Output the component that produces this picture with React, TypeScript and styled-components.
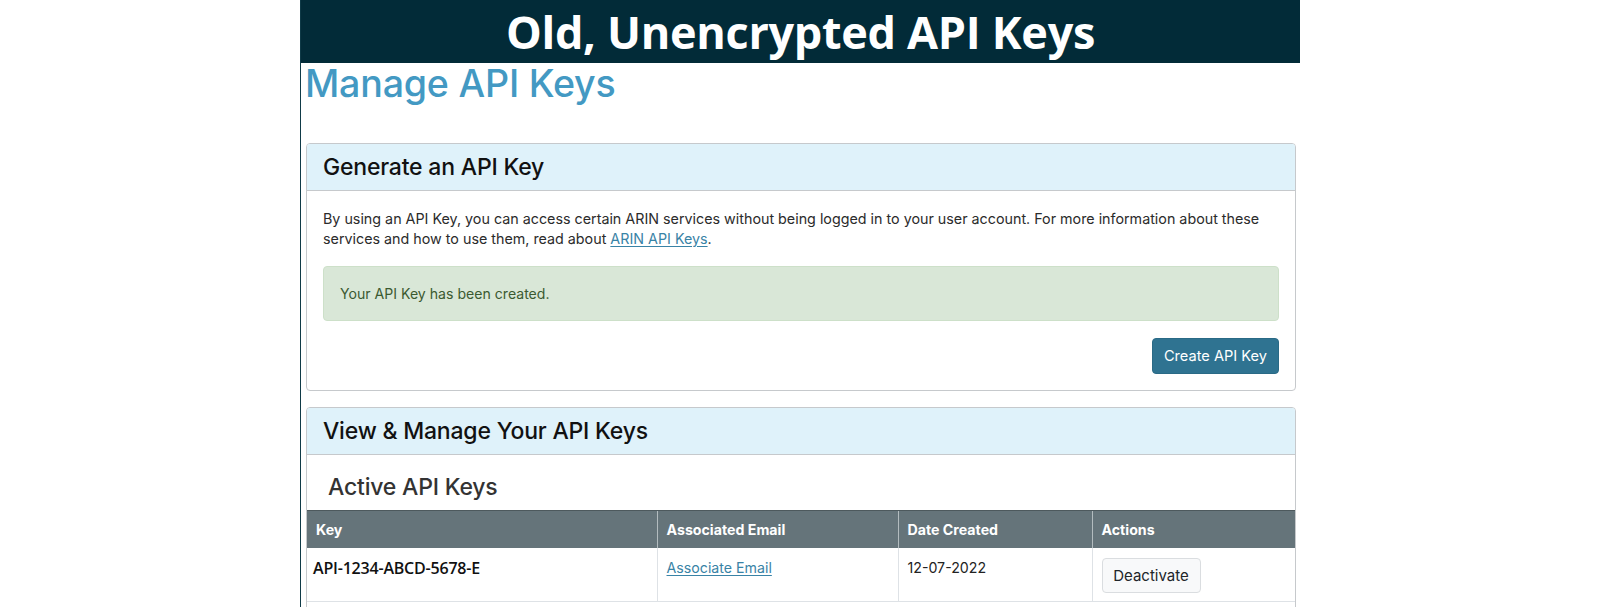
import React from "react";
import styled, { createGlobalStyle } from "styled-components";

const GlobalStyle = createGlobalStyle`
  html, body {
    margin: 0;
    padding: 0;
    background: #fff;
  }
  body {
    font-family: Inter, "Liberation Sans", Arial, sans-serif;
    color: #212529;
    -webkit-font-smoothing: antialiased;
  }
`;

const Frame = styled.div`
  margin-left: 300px;
  width: 1000px;
  min-height: 100vh;
  border-left: 1px solid #0f3a47;
  box-sizing: border-box;
  overflow: hidden;
`;

const Banner = styled.div`
  height: 63px;
  background: #022b38;
  display: flex;
  align-items: center;
  justify-content: center;
`;

const BannerText = styled.h1`
  margin: 0;
  font-family: "Open Sans", "Noto Sans", sans-serif;
  font-weight: 700;
  font-size: 45px;
  line-height: 61px;
  letter-spacing: -0.3px;
  color: #fff;
`;

const PageTitle = styled.h2`
  margin: 1px 0 40px 0;
  padding-left: 4px;
  font-size: 37.6px;
  line-height: 39px;
  font-weight: 500;
  color: #4399c3;
  letter-spacing: -0.2px;
`;

const Content = styled.div`
  padding: 0 4px 0 5px;
  display: flex;
  flex-direction: column;
  gap: 16px;
`;

const Card = styled.section`
  border: 1px solid #c6c9cc;
  border-radius: 4px;
  overflow: hidden;
`;

const CardHeader = styled.div`
  background: #dff2fa;
  border-bottom: 1px solid #c6c9cc;
  padding: 9px 16px;
`;

const CardTitle = styled.h3`
  margin: 0;
  font-size: 23px;
  line-height: 28px;
  font-weight: 500;
  color: #111;
  letter-spacing: -0.2px;
`;

const CardBody = styled.div<{ $flush?: boolean }>`
  padding: ${({ $flush }) => ($flush ? "18px 0 16px 0" : "18px 16px 16px 16px")};
  display: flex;
  flex-direction: column;
`;

const Intro = styled.p`
  margin: 0 0 17px 0;
  font-size: 14.3px;
  line-height: 20px;
  color: #2b2b2b;
`;

const Link = styled.a`
  color: #3983a6;
  text-decoration: underline;
  text-underline-offset: 2px;
`;

const Alert = styled.div`
  background: #d9e7d7;
  border: 1px solid #cde0c9;
  border-radius: 4px;
  padding: 17px 17px 16px 16px;
  font-size: 14.1px;
  line-height: 20px;
  color: #3b5a31;
`;

const Actions = styled.div`
  display: flex;
  justify-content: flex-end;
  margin-top: 17px;
`;

const PrimaryButton = styled.button`
  height: 36px;
  width: 127px;
  background: #2f7391;
  border: 1px solid #2a6a86;
  border-radius: 4px;
  color: #fff;
  font-family: inherit;
  font-size: 14.6px;
  white-space: nowrap;
  padding: 0;
  cursor: pointer;
`;

const SubTitle = styled.h4`
  margin: 0 0 8px 0;
  padding-left: 21px;
  font-size: 23px;
  line-height: 29px;
  font-weight: 500;
  color: #333;
  letter-spacing: -0.2px;
`;

const Table = styled.table`
  width: 100%;
  border-collapse: collapse;
  table-layout: fixed;
`;

const Th = styled.th<{ $width?: number }>`
  box-sizing: border-box;
  ${({ $width }) => ($width ? `width: ${$width}px;` : "")}
  background: #65747a;
  border-top: 1px solid #4d595d;
  border-left: 1px solid #b3bcbf;
  color: #fff;
  font-size: 14.2px;
  font-weight: 700;
  text-align: left;
  padding: 9px 9px 8px 9px;
  line-height: 20px;
  &:first-child {
    border-left: none;
  }
`;

const Td = styled.td`
  border-left: 1px solid #dee2e6;
  border-bottom: 1px solid #dee2e6;
  padding: 10px 9px 8px 9px;
  font-size: 14.2px;
  line-height: 20px;
  color: #222;
  vertical-align: top;
  height: 35px;
  &:first-child {
    border-left: none;
    padding-left: 6px;
  }
`;

const KeyText = styled.span`
  font-family: "Open Sans", "Noto Sans", sans-serif;
  font-weight: 600;
  font-size: 16px;
  letter-spacing: -0.2px;
  color: #111;
`;

const LightButton = styled.button`
  height: 35px;
  width: 99px;
  background: #f8f9fa;
  border: 1px solid #dadde0;
  border-radius: 4px;
  font-family: inherit;
  font-size: 15px;
  color: #212529;
  white-space: nowrap;
  padding: 0;
  cursor: pointer;
`;

const keys = [
  { key: "API-1234-ABCD-5678-E", created: "12-07-2022" },
];

export default function App() {
  return (
    <>
      <GlobalStyle />
      <Frame>
        <Banner>
          <BannerText>Old, Unencrypted API Keys</BannerText>
        </Banner>
        <PageTitle>Manage API Keys</PageTitle>
        <Content>
          <Card>
            <CardHeader>
              <CardTitle>Generate an API Key</CardTitle>
            </CardHeader>
            <CardBody>
              <Intro>
                By using an API Key, you can access certain ARIN services without being logged in to your user account. For more information about these
                <br />
                services and how to use them, read about <Link href="#">ARIN API Keys</Link>.
              </Intro>
              <Alert>Your API Key has been created.</Alert>
              <Actions>
                <PrimaryButton>Create API Key</PrimaryButton>
              </Actions>
            </CardBody>
          </Card>
          <Card>
            <CardHeader>
              <CardTitle>View &amp; Manage Your API Keys</CardTitle>
            </CardHeader>
            <CardBody $flush>
              <SubTitle>Active API Keys</SubTitle>
              <Table>
                <thead>
                  <tr>
                    <Th $width={350}>Key</Th>
                    <Th $width={241}>Associated Email</Th>
                    <Th $width={194}>Date Created</Th>
                    <Th>Actions</Th>
                  </tr>
                </thead>
                <tbody>
                  {keys.map((k) => (
                    <tr key={k.key}>
                      <Td>
                        <KeyText>{k.key}</KeyText>
                      </Td>
                      <Td>
                        <Link href="#">Associate Email</Link>
                      </Td>
                      <Td>{k.created}</Td>
                      <Td>
                        <LightButton>Deactivate</LightButton>
                      </Td>
                    </tr>
                  ))}
                </tbody>
              </Table>
            </CardBody>
          </Card>
        </Content>
      </Frame>
    </>
  );
}
